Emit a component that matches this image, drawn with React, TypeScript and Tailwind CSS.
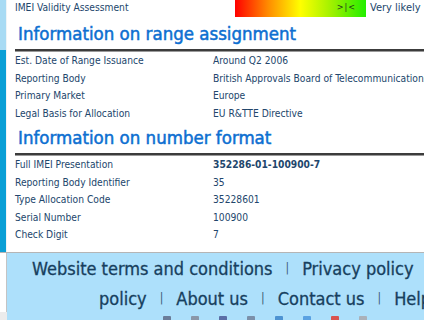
import React from "react";

const FONT = "font-['DejaVu_Sans_Condensed','DejaVu_Sans',sans-serif]";

const RANGE = [
  { k: "Est. Date of Range Issuance", v: "Around Q2 2006" },
  { k: "Reporting Body", v: "British Approvals Board of Telecommunications" },
  { k: "Primary Market", v: "Europe" },
  { k: "Legal Basis for Allocation", v: "EU R&TTE Directive" },
];

const FORMAT = [
  { k: "Full IMEI Presentation", v: "352286-01-100900-7", bold: true },
  { k: "Reporting Body Identifier", v: "35" },
  { k: "Type Allocation Code", v: "35228601" },
  { k: "Serial Number", v: "100900" },
  { k: "Check Digit", v: "7" },
];

const ICONS = ["#6b7d99", "#8a97a8", "#5a6ea6", "#7b90a9", "#4d93d2", "#5aa2e2", "#d9534f", "#aab1b9"];

function Heading({ children }: { children: React.ReactNode }) {
  return (
    <div>
      <div className="h-[31px] flex items-center pl-[3px] pt-[1px] text-[18.5px] text-[#0d6fd1] whitespace-nowrap [-webkit-text-stroke:0.5px_#0d6fd1]">
        {children}
      </div>
      <div className="h-[3px] bg-[#3c3c3c] border-b border-[#9a9a9a]" />
    </div>
  );
}

function Row({ k, v, bold }: { k: string; v: string; bold?: boolean }) {
  return (
    <div className="h-[17.5px] flex items-center text-[10.2px] text-[#22466c] whitespace-nowrap">
      <div className="w-[198px] shrink-0">{k}</div>
      <div className={bold ? "font-bold" : ""}>{v}</div>
    </div>
  );
}

export default function App() {
  return (
    <div className={`w-[424px] h-[320px] overflow-hidden bg-white flex flex-col ${FONT}`}>
      <div className="flex h-[252px] shrink-0">
        {/* side strip */}
        <div className="w-[6px] shrink-0 flex flex-col">
          <div className="h-[50px] bg-[#a8dbf4]" />
          <div className="flex-1 bg-[#0a9fd6]" />
        </div>
        <div className="w-px bg-[#eef4f7]" />

        <div className="flex-1 pl-[8px] overflow-hidden">
          {/* validity */}
          <div className="h-[20px] -mt-[2px] flex items-center text-[10.2px] text-[#22466c] whitespace-nowrap">
            <div className="w-[220px] shrink-0">IMEI Validity Assessment</div>
            <div className="w-[131px] h-[18px] bg-[linear-gradient(90deg,#ff0000_0%,#ff8a00_25%,#ffff00_50%,#9af000_75%,#22ee00_100%)] flex items-center justify-end pr-[10px]">
              <span className="text-[9px] text-[#1f3a1a] tracking-[1px]">&gt;|&lt;</span>
            </div>
            <div className="pl-[4px] text-[11px]">Very likely</div>
          </div>

          <Heading>Information on range assignment</Heading>
          {RANGE.map((r) => (
            <Row key={r.k} {...r} />
          ))}

          <Heading>Information on number format</Heading>
          {FORMAT.map((r) => (
            <Row key={r.k} {...r} />
          ))}
        </div>
      </div>

      <div className="h-px bg-[#b5b5b5] shrink-0" />

      {/* footer */}
      <div className="flex flex-1">
        <div className="w-[7px] shrink-0 flex flex-col">
          <div className="flex-1 border-r border-[#c4c4c4] bg-white" />
          <div className="h-[12px] bg-[#ececec]" />
        </div>
        <div className="flex-1 bg-[#ade0fb] overflow-hidden text-[18px] text-[#173f5e] whitespace-nowrap [-webkit-text-stroke:0.3px_#173f5e]">
          <div className="h-[30px] flex items-center pl-[25px] gap-[13px]">
            <span>Website terms and conditions</span>
            <span className="text-[12px] text-[#3a5a74] [-webkit-text-stroke:0px]">|</span>
            <span>Privacy policy</span>
          </div>
          <div className="h-[30px] flex items-center pl-[92px] gap-[13px]">
            <span>policy</span>
            <span className="text-[12px] text-[#3a5a74] [-webkit-text-stroke:0px]">|</span>
            <span>About us</span>
            <span className="text-[12px] text-[#3a5a74] [-webkit-text-stroke:0px]">|</span>
            <span>Contact us</span>
            <span className="text-[12px] text-[#3a5a74] [-webkit-text-stroke:0px]">|</span>
            <span>Help</span>
          </div>
          <div className="flex pl-[156px] pt-[3px] gap-[20px]">
            {ICONS.map((c, i) => (
              <div key={i} className="w-[8px] h-[8px] rounded-[1px]" style={{ background: c }} />
            ))}
          </div>
        </div>
      </div>
    </div>
  );
}
